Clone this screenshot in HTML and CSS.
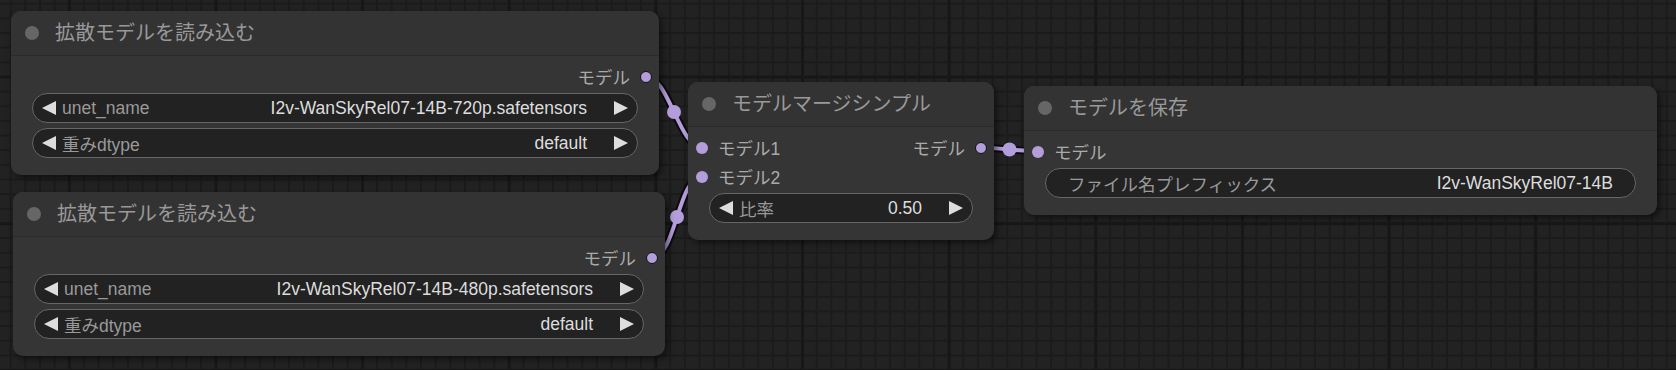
FILE: index.html
```html
<!DOCTYPE html>
<html lang="ja">
<head>
<meta charset="utf-8">
<title>ComfyUI</title>
<link rel="stylesheet" href="styles.css">
</head>
<body>
<div class="canvas">
  <svg class="links" width="1676" height="370" viewBox="0 0 1676 370">
    <path class="link-border" d="M646 76.5 C668.6 76.5 679.4 147.5 702 147.5"/>
    <path class="link-line" d="M646 76.5 C668.6 76.5 679.4 147.5 702 147.5"/>
    <circle class="link-mid" cx="674" cy="112" r="7"/>
    <path class="link-border" d="M652 257.5 C675.8 257.5 678.2 176.5 702 176.5"/>
    <path class="link-line" d="M652 257.5 C675.8 257.5 678.2 176.5 702 176.5"/>
    <circle class="link-mid" cx="677" cy="217" r="7"/>
    <path class="link-border" d="M981 147.5 C995 147.5 1024 151.5 1038 151.5"/>
    <path class="link-line" d="M981 147.5 C995 147.5 1024 151.5 1038 151.5"/>
    <circle class="link-mid" cx="1009.5" cy="149.5" r="7"/>
  </svg>

  <div class="node n1">
    <div class="node-title"><span class="title-dot"></span><span class="title-text">拡散モデルを読み込む</span></div>
    <div class="node-body">
      <div class="slots">
        <div class="slot-col"></div>
        <div class="slot-col">
          <div class="slot out"><span class="slot-label">モデル</span><span class="dot linked"></span></div>
        </div>
      </div>
      <div class="widgets">
        <div class="widget"><span class="arrow left"></span><span class="w-label">unet_name</span><span class="w-value">I2v-WanSkyRel07-14B-720p.safetensors</span><span class="arrow right"></span></div>
        <div class="widget"><span class="arrow left"></span><span class="w-label">重みdtype</span><span class="w-value">default</span><span class="arrow right"></span></div>
      </div>
    </div>
  </div>

  <div class="node n2">
    <div class="node-title"><span class="title-dot"></span><span class="title-text">拡散モデルを読み込む</span></div>
    <div class="node-body">
      <div class="slots">
        <div class="slot-col"></div>
        <div class="slot-col">
          <div class="slot out"><span class="slot-label">モデル</span><span class="dot linked"></span></div>
        </div>
      </div>
      <div class="widgets">
        <div class="widget"><span class="arrow left"></span><span class="w-label">unet_name</span><span class="w-value">I2v-WanSkyRel07-14B-480p.safetensors</span><span class="arrow right"></span></div>
        <div class="widget"><span class="arrow left"></span><span class="w-label">重みdtype</span><span class="w-value">default</span><span class="arrow right"></span></div>
      </div>
    </div>
  </div>

  <div class="node n3">
    <div class="node-title"><span class="title-dot"></span><span class="title-text">モデルマージシンプル</span></div>
    <div class="node-body">
      <div class="slots">
        <div class="slot-col">
          <div class="slot in"><span class="dot"></span><span class="slot-label">モデル1</span></div>
          <div class="slot in"><span class="dot"></span><span class="slot-label">モデル2</span></div>
        </div>
        <div class="slot-col">
          <div class="slot out"><span class="slot-label">モデル</span><span class="dot linked"></span></div>
        </div>
      </div>
      <div class="widgets">
        <div class="widget"><span class="arrow left"></span><span class="w-label">比率</span><span class="w-value">0.50</span><span class="arrow right"></span></div>
      </div>
    </div>
  </div>

  <div class="node n4">
    <div class="node-title"><span class="title-dot"></span><span class="title-text">モデルを保存</span></div>
    <div class="node-body">
      <div class="slots">
        <div class="slot-col">
          <div class="slot in"><span class="dot"></span><span class="slot-label">モデル</span></div>
        </div>
        <div class="slot-col"></div>
      </div>
      <div class="widgets">
        <div class="widget text"><span class="w-label">ファイル名プレフィックス</span><span class="w-value">I2v-WanSkyRel07-14B</span></div>
      </div>
    </div>
  </div>
</div>
</body>
</html>
```

FILE: styles.css
```css
* { box-sizing: border-box; }

html, body {
  margin: 0;
  padding: 0;
}

body {
  width: 1676px;
  height: 370px;
  overflow: hidden;
  font-family: "Liberation Sans", "Noto Sans CJK JP", sans-serif;
  background-color: #222222;
  background-image:
    linear-gradient(to right, #171717 3px, transparent 3px),
    linear-gradient(to bottom, #171717 3px, transparent 3px),
    linear-gradient(to right, #1b1b1b 2px, transparent 2px),
    linear-gradient(to bottom, #1b1b1b 2px, transparent 2px);
  background-size: 146.667px 146.667px, 146.667px 146.667px, 14.667px 14.667px, 14.667px 14.667px;
  background-position: 67.8px 0, 0 75.5px, 9.67px 0, 0 2.67px;
}

.canvas {
  position: relative;
  width: 1676px;
  height: 370px;
}

.links {
  position: absolute;
  left: 0;
  top: 0;
}

.link-border {
  fill: none;
  stroke: rgba(0, 0, 0, 0.65);
  stroke-width: 8;
}

.link-line {
  fill: none;
  stroke: #b39ddb;
  stroke-width: 4;
}

.link-mid {
  fill: #b39ddb;
}

.node {
  position: absolute;
  background: #353535;
  border-radius: 10px;
  box-shadow: 3px 3px 6px rgba(0, 0, 0, 0.5);
  display: flex;
  flex-direction: column;
}

.n1 { left: 11px; top: 11px; width: 648px; }
.n2 { left: 13px; top: 192px; width: 652px; }
.n3 { left: 688px; top: 82px; width: 306px; }
.n4 { left: 1024px; top: 86px; width: 633px; }

.node-title {
  height: 45px;
  display: flex;
  align-items: center;
  gap: 16px;
  padding: 0 0 1px 14px;
  background: #333333;
  border-radius: 10px 10px 0 0;
  border-bottom: 1px solid #2a2a2a;
}

.title-dot {
  width: 14px;
  height: 14px;
  border-radius: 50%;
  background: #666666;
  flex: none;
}

.title-text {
  color: #999999;
  font-size: 20px;
  line-height: 1;
  white-space: nowrap;
}

.node-body {
  padding: 6px 0 17px;
  display: flex;
  flex-direction: column;
  gap: 2px;
}

.slots {
  display: flex;
  justify-content: space-between;
}

.slot-col {
  display: flex;
  flex-direction: column;
}

.slot {
  height: 29px;
  display: flex;
  align-items: center;
  gap: 10px;
  color: #aaaaaa;
  font-size: 17.5px;
  white-space: nowrap;
}

.slot.in { padding-left: 8px; }
.slot.out { padding-right: 7px; justify-content: flex-end; }

.dot {
  width: 12px;
  height: 12px;
  border-radius: 50%;
  background: #b39ddb;
  flex: none;
}

.dot.linked {
  border: 1.5px solid #111111;
}

.widgets {
  display: flex;
  flex-direction: column;
  gap: 5px;
  margin: 0 21px;
}

.widget {
  height: 30px;
  display: flex;
  align-items: center;
  background: #222222;
  border: 1px solid #666666;
  border-radius: 15px;
  padding: 0 9px 0 9px;
  font-size: 17.5px;
  white-space: nowrap;
}

.widget.text {
  padding: 0 22px;
}

.arrow {
  width: 14px;
  height: 14px;
  background: #dddddd;
  flex: none;
}

.arrow.left { clip-path: polygon(100% 0, 0 50%, 100% 100%); }
.arrow.right { clip-path: polygon(0 0, 100% 50%, 0 100%); }

.w-label {
  color: #999999;
  flex: 1;
  margin-left: 6px;
}

.widget.text .w-label { margin-left: 0; }

.w-value {
  color: #dddddd;
  margin-right: 27px;
}

.widget.text .w-value { margin-right: 0; }
```
